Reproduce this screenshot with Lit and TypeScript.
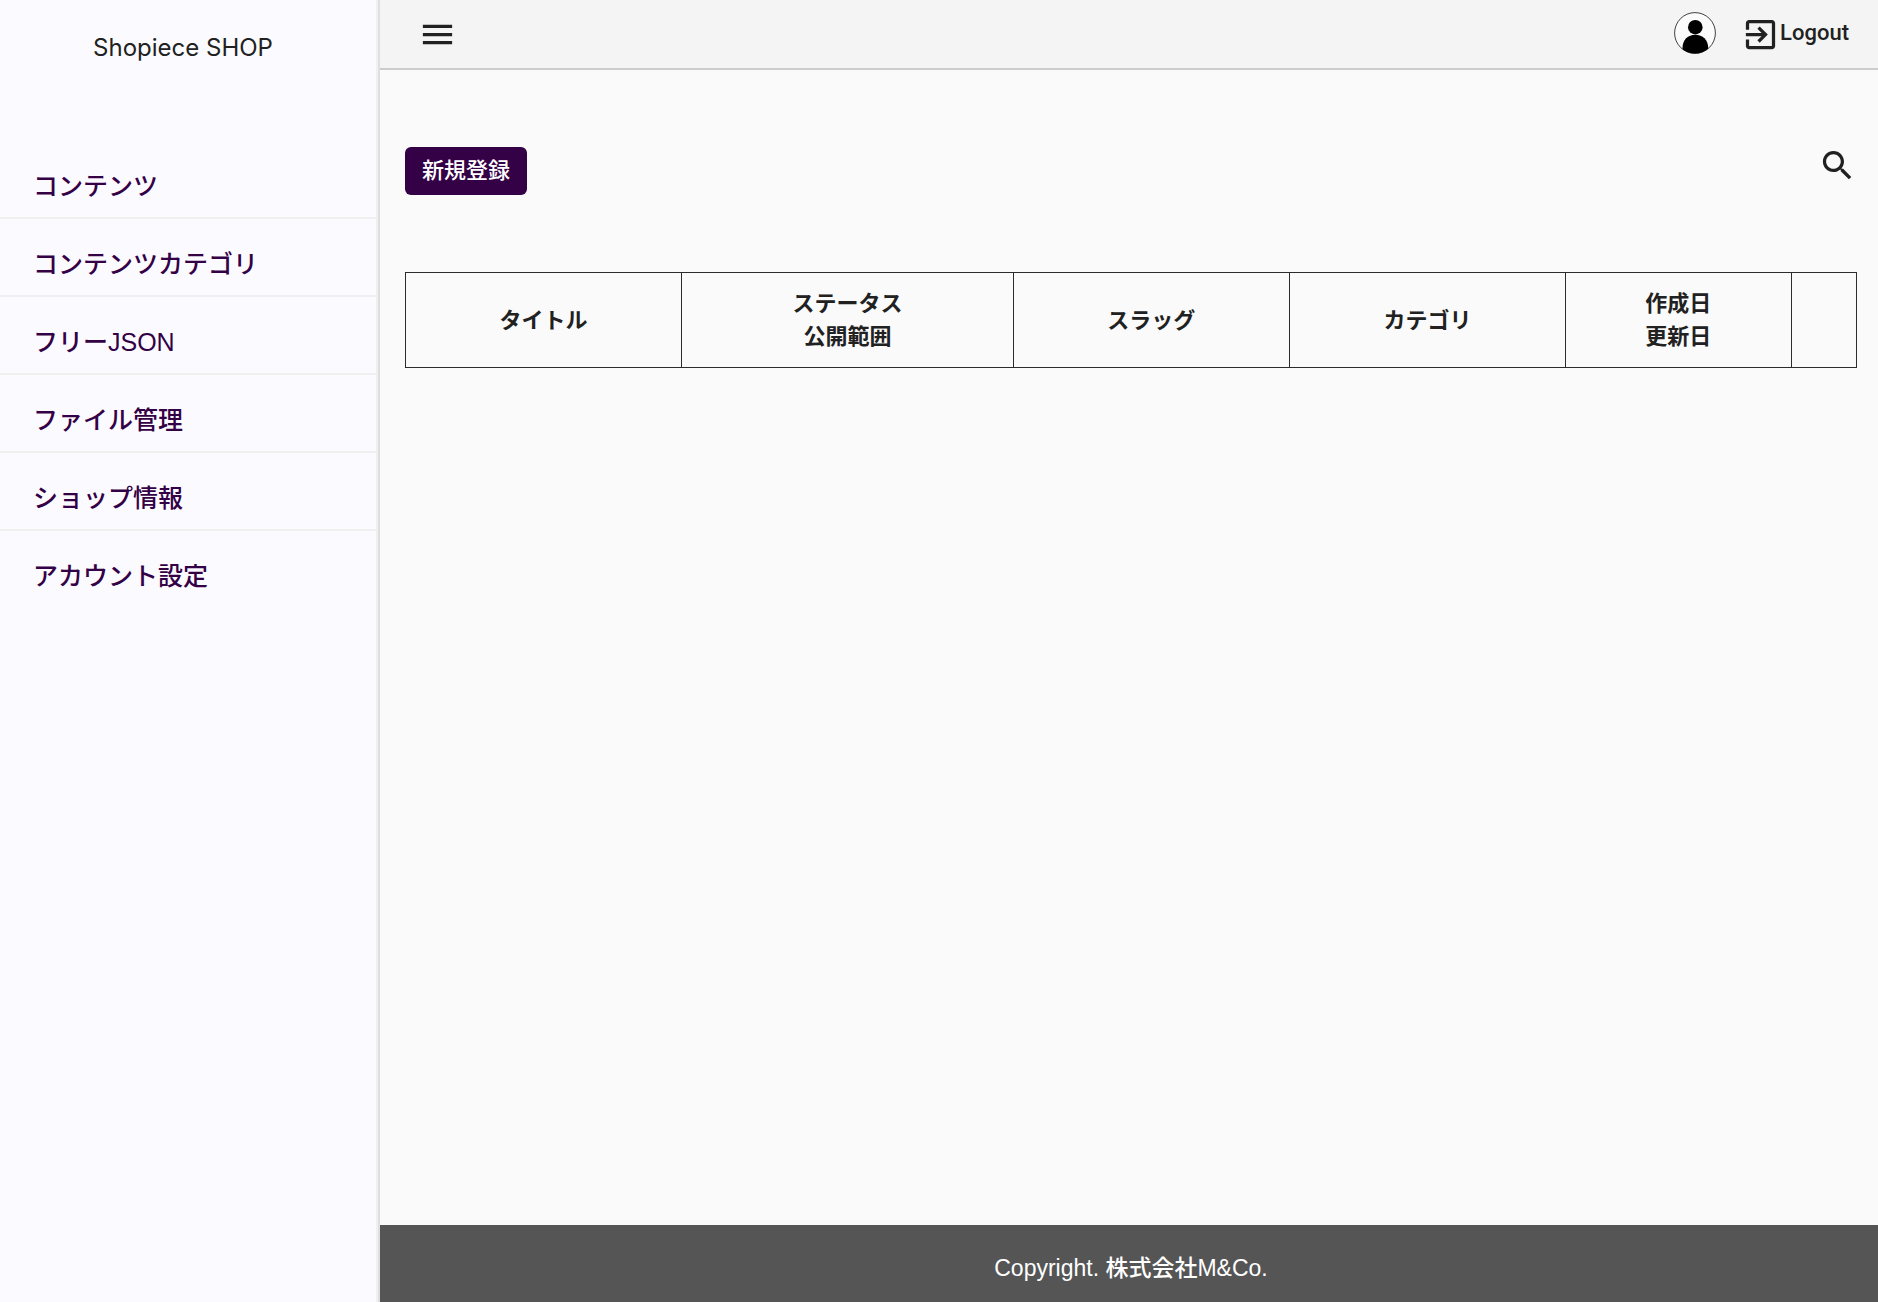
import { LitElement, html, css } from "lit";
import { customElement } from "lit/decorators.js";

const MENU = [
  "コンテンツ",
  "コンテンツカテゴリ",
  "フリーJSON",
  "ファイル管理",
  "ショップ情報",
  "アカウント設定",
];

const COLUMNS: string[][] = [
  ["タイトル"],
  ["ステータス", "公開範囲"],
  ["スラッグ"],
  ["カテゴリ"],
  ["作成日", "更新日"],
];

@customElement("app-sidebar")
class AppSidebar extends LitElement {
  static styles = css`
    :host {
      display: block;
      box-sizing: border-box;
      background: #fbfbff;
      border-right: 2px solid #dfdfdf;
      box-shadow: inset -2px 0 0 #f0f0f1;
    }
    .brand {
      margin: 0;
      padding: 32px 12px 0 0;
      font: 400 24px/32px Inter, "Noto Sans CJK JP", sans-serif;
      text-align: center;
      color: #212121;
    }
    .menu {
      list-style: none;
      margin: 77px 2px 0 0;
      padding: 0;
    }
    .item + .item {
      border-top: 2px solid #f0f0f1;
    }
    .link {
      display: block;
      padding: 26px 33px 12px;
      line-height: 38px;
      font-size: 25px;
      font-weight: 500;
      color: #340046;
      text-decoration: none;
    }
  `;
  render() {
    return html`
      <p class="brand">Shopiece SHOP</p>
      <nav>
        <ul class="menu">
          ${MENU.map((m) => html`<li class="item"><a class="link" href="#">${m}</a></li>`)}
        </ul>
      </nav>
    `;
  }
}

@customElement("app-header")
class AppHeader extends LitElement {
  static styles = css`
    :host {
      display: flex;
      align-items: center;
      justify-content: space-between;
      height: 68px;
      padding: 0 29px 0 38px;
      background: #f4f4f4;
      border-bottom: 2px solid #ccc;
    }
    .toggle,
    .avatar {
      display: flex;
      padding: 0;
      border: 0;
      background: none;
      color: inherit;
      cursor: pointer;
    }
    .avatar {
      padding-bottom: 2px;
    }
    .icon {
      display: block;
      width: 39px;
      height: 39px;
      fill: currentColor;
    }
    .face {
      display: block;
      width: 42px;
      height: 42px;
    }
    .actions {
      display: flex;
      align-items: center;
      gap: 25px;
    }
    .logout {
      display: flex;
      align-items: center;
      font: 500 22px/39px Roboto, sans-serif;
      color: inherit;
      text-decoration: none;
    }
    .label {
      padding-bottom: 3px;
      line-height: 36px;
    }
  `;
  render() {
    return html`
      <button class="toggle" aria-label="メニュー">
        <svg class="icon" viewBox="0 0 24 24"><path d="M3 18h18v-2H3v2zm0-5h18v-2H3v2zm0-7v2h18V6H3z" /></svg>
      </button>
      <div class="actions">
        <button class="avatar" aria-label="アカウント">
          <svg class="face" viewBox="0 0 42 42">
            <defs><clipPath id="disc"><circle cx="21" cy="21" r="20.5" /></clipPath></defs>
            <circle cx="21" cy="21" r="20.4" fill="#fbfbfb" stroke="#111" stroke-width="0.8" />
            <g clip-path="url(#disc)">
              <circle cx="21.3" cy="15.2" r="7.3" />
              <path d="M8.5 42V36C8.5 28 14 22.8 21.3 22.8S34.2 28 34.2 36V42Z" />
            </g>
          </svg>
        </button>
        <a class="logout" href="#">
          <svg class="icon" viewBox="0 0 24 24">
            <path
              d="M10.09 15.59L11.5 17l5-5-5-5-1.41 1.41L12.67 11H3v2h9.67l-2.58 2.59zM19 3H5c-1.11 0-2 .9-2 2v4h2V5h14v14H5v-4H3v4c0 1.1.89 2 2 2h14c1.1 0 2-.9 2-2V5c0-1.1-.9-2-2-2z"
            />
          </svg>
          <span class="label">Logout</span>
        </a>
      </div>
    `;
  }
}

@customElement("content-list")
class ContentList extends LitElement {
  static styles = css`
    :host {
      display: block;
      padding: 76px 21px 48px 25px;
    }
    .toolbar {
      display: flex;
      align-items: flex-start;
      justify-content: space-between;
      margin-bottom: 77px;
    }
    .create {
      height: 48px;
      margin-top: 1px;
      padding: 0 17px 6px;
      border: 0;
      border-radius: 6px;
      background: #340046;
      color: #fff;
      font: inherit;
      font-size: 22px;
      font-weight: 500;
      cursor: pointer;
    }
    .search {
      padding: 0;
      border: 0;
      background: none;
      color: inherit;
      cursor: pointer;
    }
    .icon {
      display: block;
      width: 39px;
      height: 39px;
      fill: currentColor;
    }
    .table {
      width: 100%;
      table-layout: fixed;
      border-collapse: collapse;
    }
    .c-mid {
      width: 19%;
    }
    .c-wide {
      width: 22.8%;
    }
    .c-date {
      width: 15.5%;
    }
    .c-menu {
      width: 4.5%;
    }
    .cell {
      height: 66px;
      padding: 14px 8px;
      border: 1px solid #2c2c2c;
      font-size: 22px;
      line-height: 33px;
      font-weight: 700;
      text-align: center;
    }
    .line {
      display: block;
    }
  `;
  render() {
    return html`
      <div class="toolbar">
        <button class="create">新規登録</button>
        <button class="search" aria-label="検索">
          <svg class="icon" viewBox="0 0 24 24">
            <path
              d="M15.5 14h-.79l-.28-.27C15.41 12.59 16 11.11 16 9.5 16 5.91 13.09 3 9.5 3S3 5.91 3 9.5 5.91 16 9.5 16c1.61 0 3.09-.59 4.23-1.57l.27.28v.79l5 4.99L20.49 19l-4.99-5zm-6 0C7.01 14 5 11.99 5 9.5S7.01 5 9.5 5 14 7.01 14 9.5 11.99 14 9.5 14z"
            />
          </svg>
        </button>
      </div>
      <table class="table">
        <colgroup>
          <col class="c-mid" /><col class="c-wide" /><col class="c-mid" /><col class="c-mid" /><col class="c-date" /><col class="c-menu" />
        </colgroup>
        <thead>
          <tr>
            ${COLUMNS.map(
              (lines) => html`<th class="cell" scope="col">${lines.map((l) => html`<span class="line">${l}</span>`)}</th>`
            )}
            <td class="cell"></td>
          </tr>
        </thead>
      </table>
    `;
  }
}

@customElement("app-root")
class AppRoot extends LitElement {
  static styles = css`
    :host {
      display: grid;
      grid-template-columns: 380px minmax(0, 1fr);
      min-height: 100vh;
      background: #fafafa;
      color: #212121;
      font-family: "Liberation Sans", "Noto Sans CJK JP", sans-serif;
    }
    .page {
      display: flex;
      flex-direction: column;
    }
    .main {
      flex: 1;
    }
    .footer {
      padding: 27px 16px 17px 20px;
      background: #555;
      color: #fff;
      font-size: 23px;
      font-weight: 500;
      line-height: 33px;
      text-align: center;
    }
  `;
  render() {
    return html`
      <app-sidebar></app-sidebar>
      <div class="page">
        <app-header></app-header>
        <main class="main"><content-list></content-list></main>
        <footer class="footer">Copyright. 株式会社M&amp;Co.</footer>
      </div>
    `;
  }
}
